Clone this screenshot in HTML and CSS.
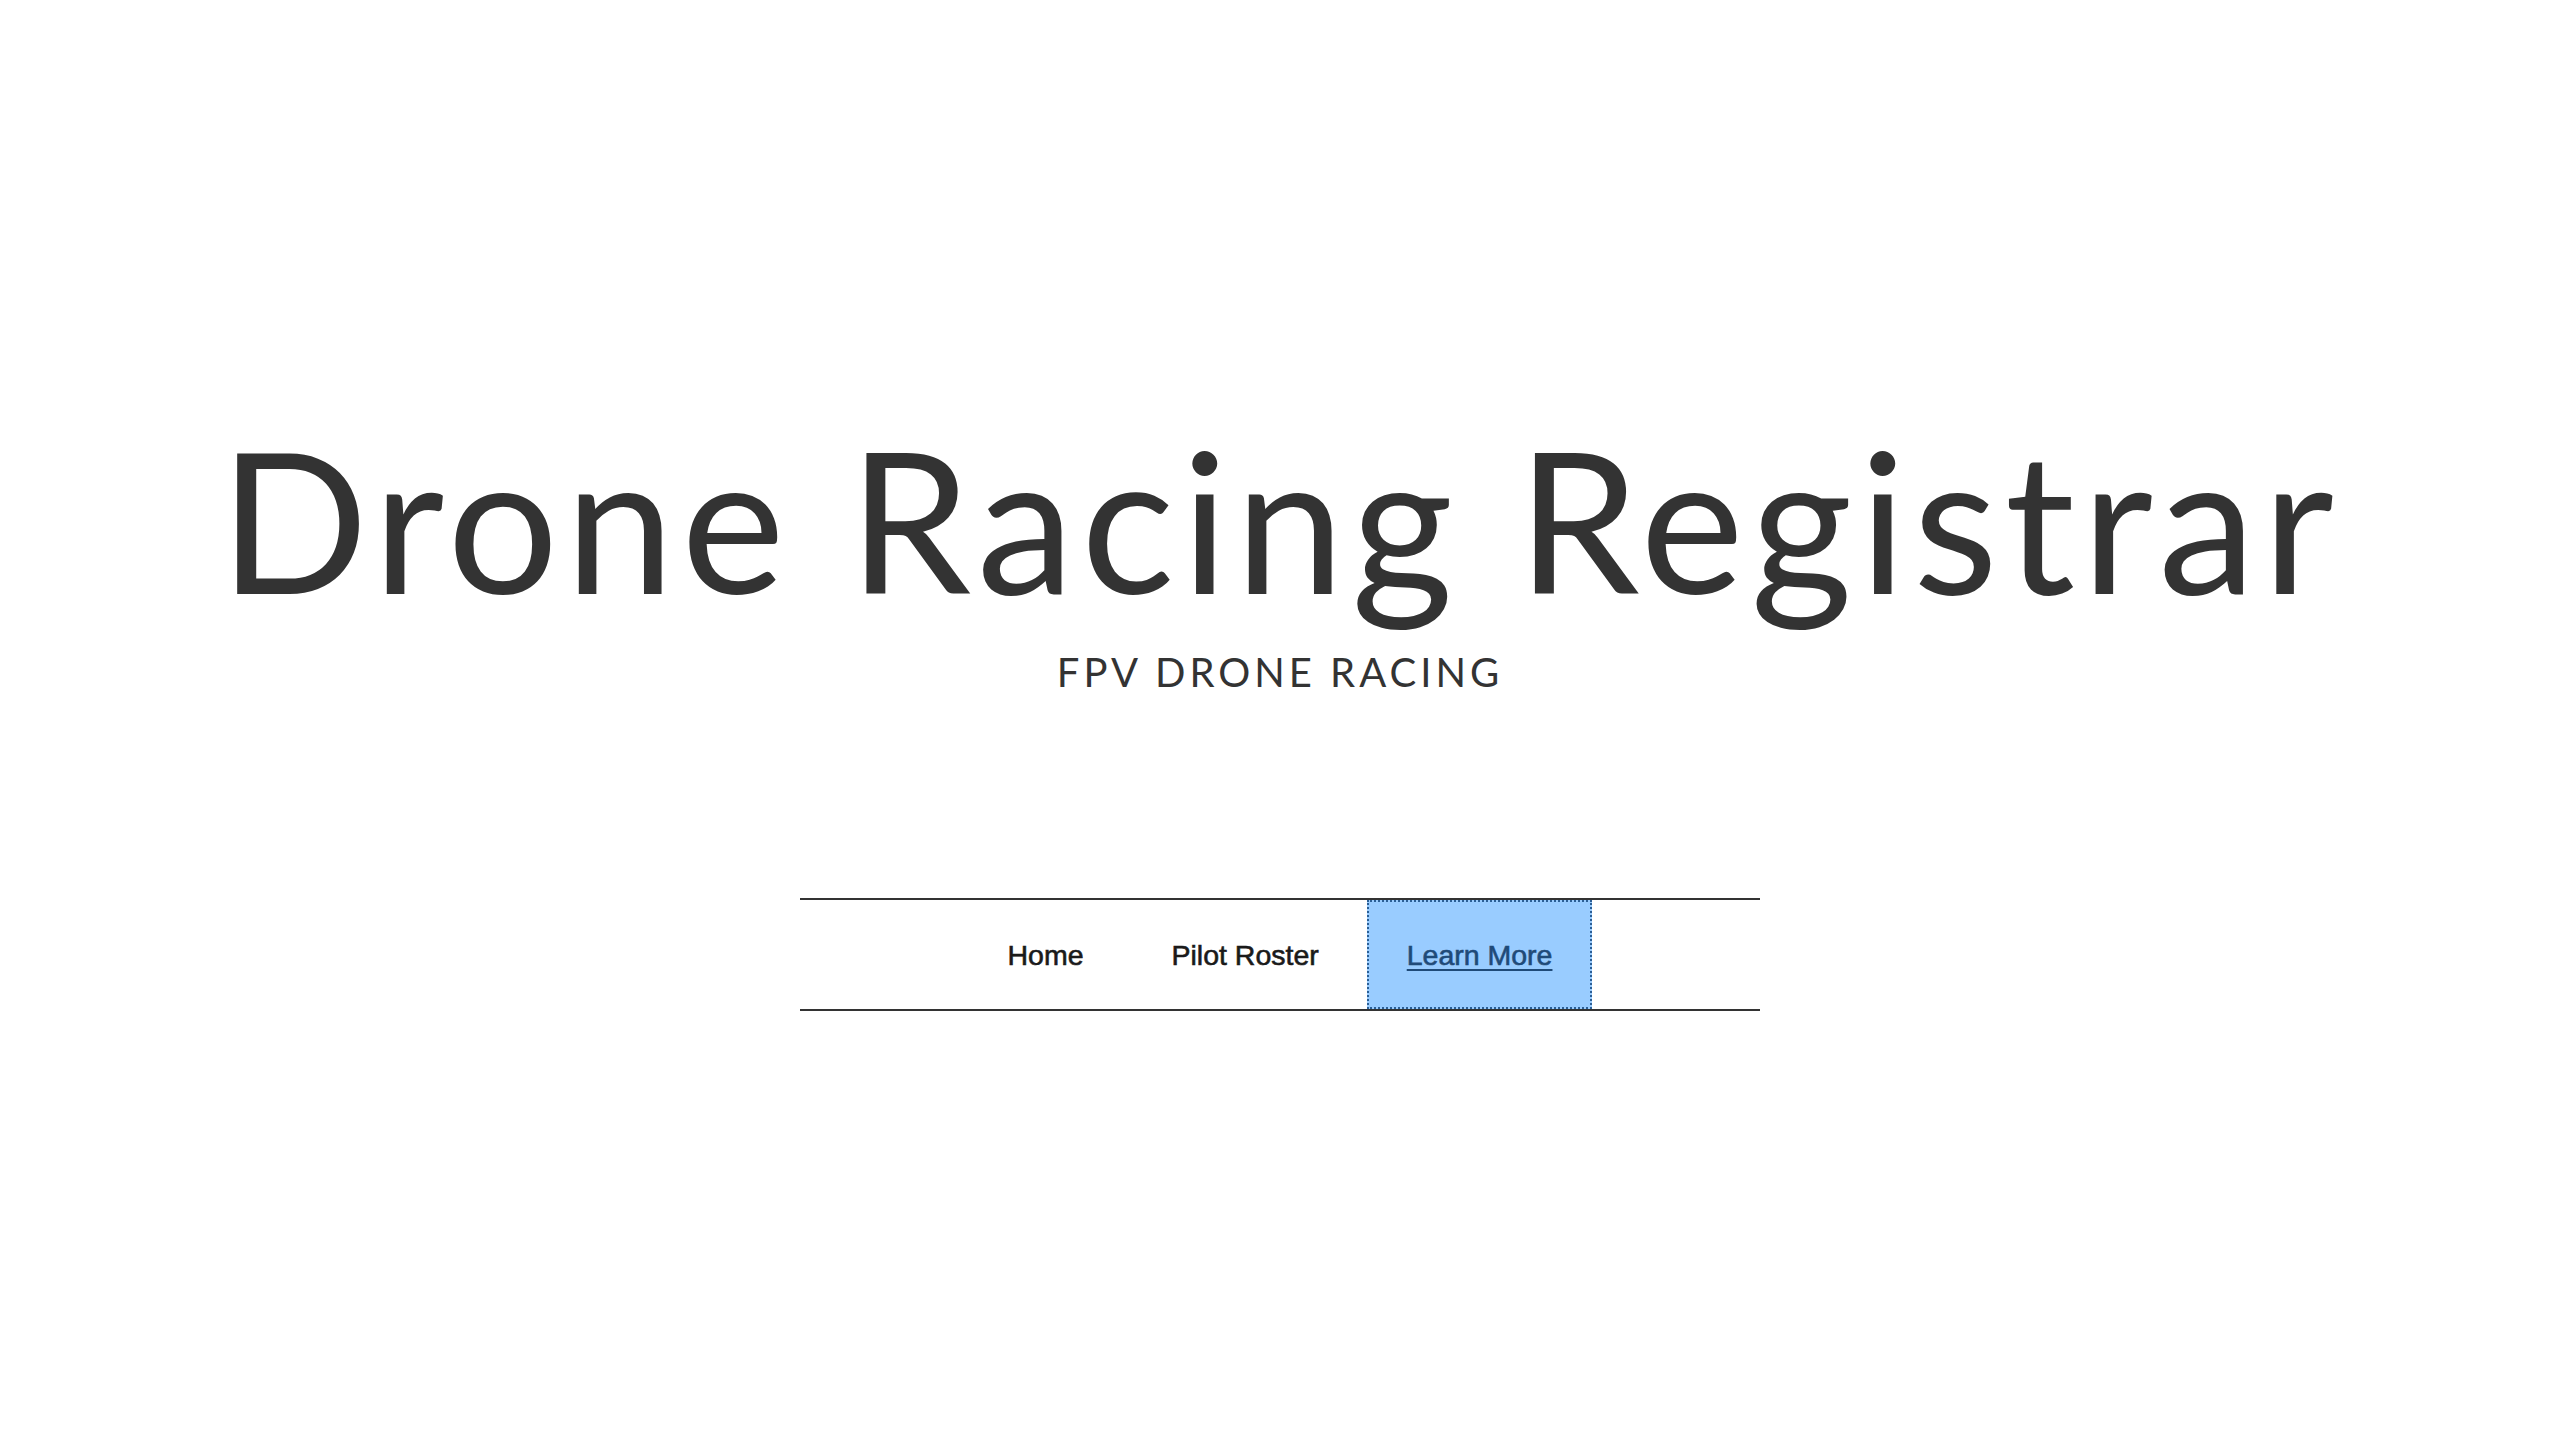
FILE: index.html
```html
<!DOCTYPE html>
<html lang="en">
<head>
<meta charset="utf-8">
<title>Drone Racing Registrar</title>
<link rel="stylesheet" href="styles.css">
</head>
<body>
<header class="masthead">
  <h1 class="title">Drone Racing Registrar</h1>
  <p class="subtitle">FPV DRONE RACING</p>
</header>
<nav class="nav">
  <a class="nav-link" href="#">Home</a>
  <a class="nav-link" href="#">Pilot Roster</a>
  <a class="nav-link is-active" href="#">Learn More</a>
</nav>
</body>
</html>
```

FILE: styles.css
```css
html, body {
  margin: 0;
  padding: 0;
  background: #ffffff;
}

body {
  width: 2560px;
  height: 1452px;
  color: #333333;
  font-family: "Lato", "Open Sans", sans-serif;
}

.masthead {
  padding-top: 401px;
  text-align: center;
}

.title {
  margin: 0;
  font-size: 196px;
  font-weight: 400;
  line-height: 1.2;
  letter-spacing: 6.8px;
  color: #333333;
}

.subtitle {
  margin: 12px 0 0;
  font-size: 40px;
  line-height: 1.2;
  letter-spacing: 4px;
  color: #333333;
}

.nav {
  width: 960px;
  margin: 202px auto 0;
  border-top: 2px solid #333333;
  border-bottom: 2px solid #333333;
  text-align: center;
  font-family: "Liberation Sans", Arial, sans-serif;
  font-size: 28.5px;
  line-height: 29px;
}

.nav-link {
  display: inline-block;
  padding: 41px 40px 39px;
  color: #1a1a1a;
  text-decoration: none;
  vertical-align: top;
  -webkit-text-stroke: 0.6px currentColor;
}

.nav-link.is-active {
  background: #99ccff;
  color: #1f4a78;
  text-decoration: underline;
  text-decoration-thickness: 2px;
  text-underline-offset: 4px;
  outline: 2px dotted #2b5f96;
  outline-offset: -2px;
}
```
